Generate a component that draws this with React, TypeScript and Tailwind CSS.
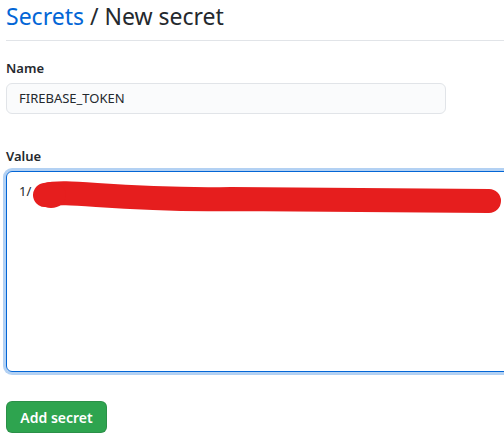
export default function App() {
  return (
    <div
      className="h-[440px] w-[504px] overflow-hidden bg-white pl-[6px] text-[#24292e]"
      style={{ fontFamily: '"Noto Sans", "Open Sans", Arial, sans-serif' }}
    >
      <div className="flex h-[41px] items-start border-b border-[#e1e4e8] pt-[1px]">
        <h1 className="text-[23px] leading-[30px] font-normal">
          <span className="text-[#0366d6]">Secrets</span> / New secret
        </h1>
      </div>

      <form className="flex flex-col">
        <label className="mt-[17px] text-[13px] leading-[20px] font-semibold">Name</label>
        <div className="mt-[5px] flex h-[31px] w-[440px] items-center rounded-[6px] border border-[#e1e4e8] bg-[#fafbfc] px-[12px] text-[13px]">
          FIREBASE_TOKEN
        </div>

        <label className="mt-[32px] text-[13px] leading-[20px] font-semibold">Value</label>
        <div className="relative mt-[5px] h-[201px] w-[540px] rounded-[6px] border border-[#0366d6] px-[12px] pt-[10px] text-[13px] shadow-[0_0_0_3px_rgba(3,102,214,0.3)]">
          <span>1/</span>
          <svg className="absolute left-[24px] top-[7px]" width="480" height="40" viewBox="0 0 480 40">
            <path
              d="M14 16 C 40 10, 80 22, 200 20 L 458 22"
              stroke="#e61e1e"
              strokeWidth="24"
              strokeLinecap="round"
              fill="none"
            />
            <ellipse cx="20" cy="16" rx="15" ry="13" fill="#e61e1e" />
          </svg>
        </div>

        <button
          type="button"
          className="mt-[29px] flex h-[32px] w-[101px] items-center justify-center rounded-[6px] border border-[rgba(27,31,35,0.15)] bg-[#2ea44f] text-[14px] font-semibold text-white"
        >
          Add secret
        </button>
      </form>
    </div>
  );
}
